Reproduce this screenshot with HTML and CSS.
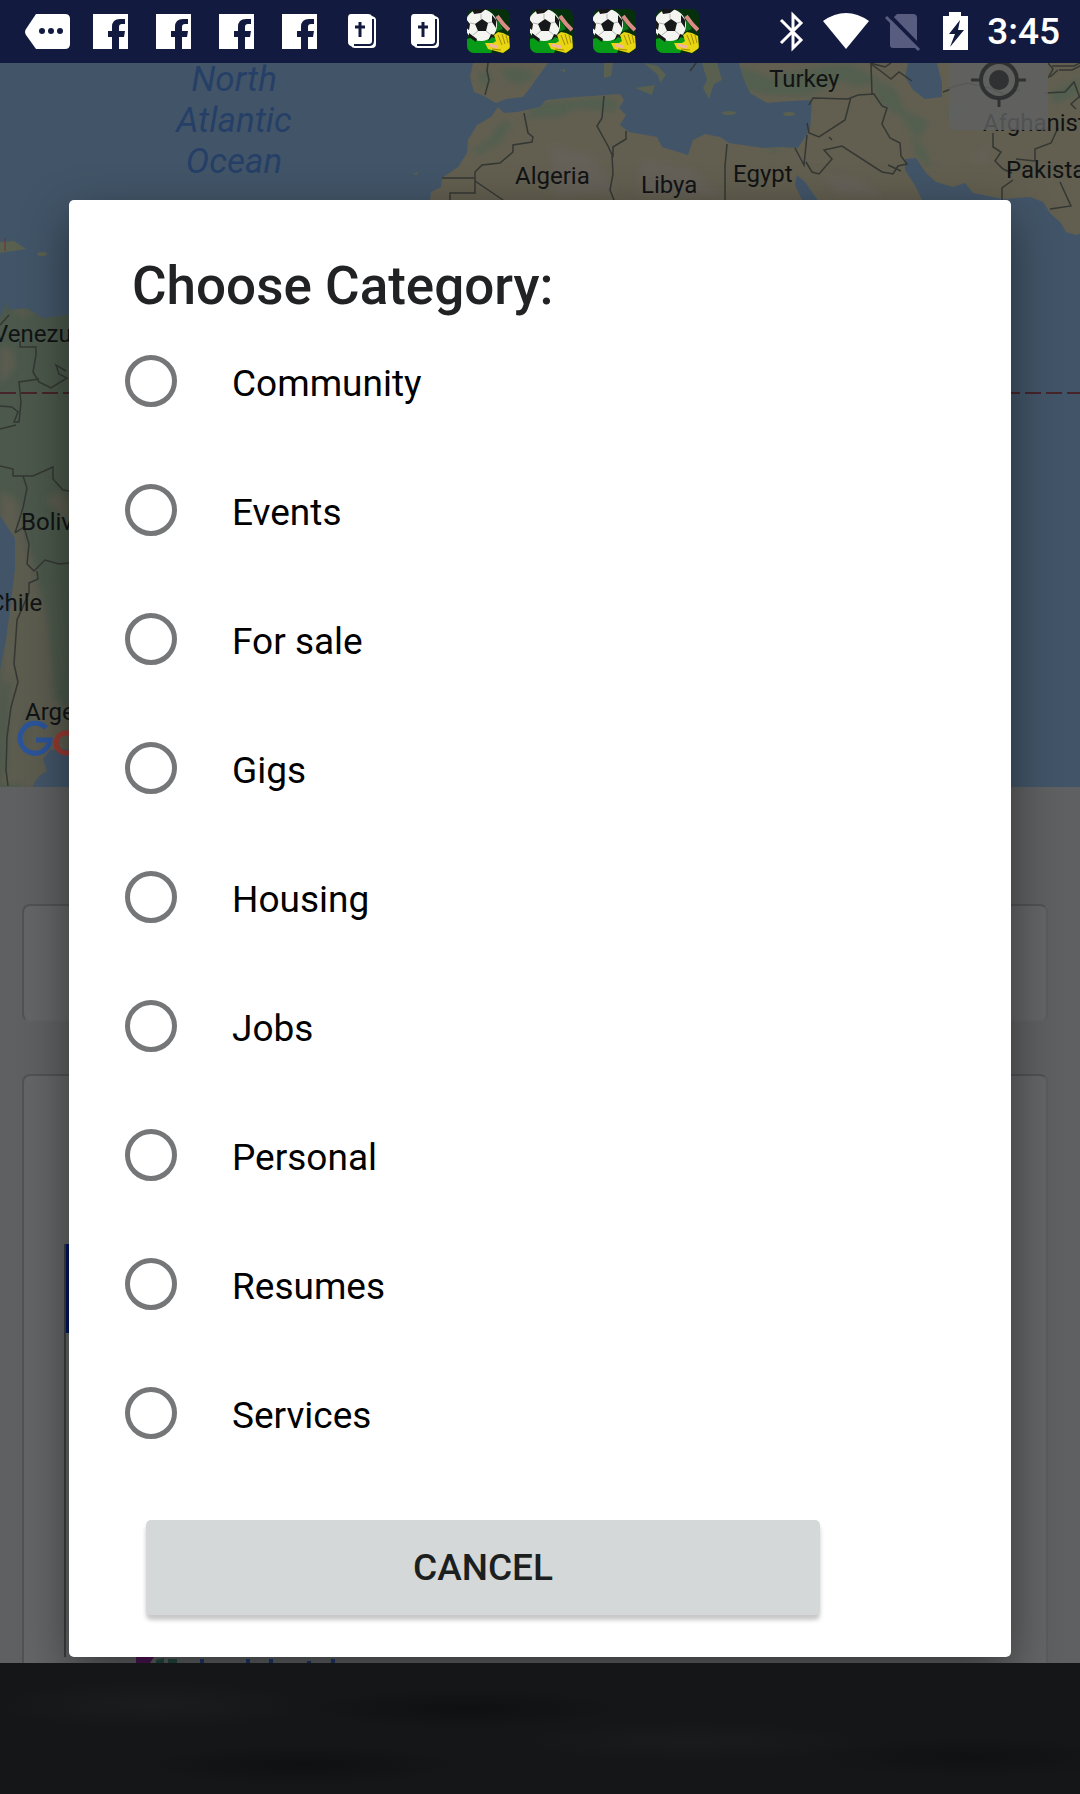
FILE: index.html
```html
<!DOCTYPE html>
<html lang="en">
<head>
<meta charset="utf-8">
<meta name="viewport" content="width=device-width, initial-scale=1">
<title>Choose Category</title>
<link rel="stylesheet" href="styles.css">
</head>
<body>
<svg class="defs" width="0" height="0" aria-hidden="true">
  <symbol id="fb" viewBox="0 0 63 63"><path fill="#fff" d="M14 14h35v35H40V37h5l1-6h-6v-4q0-3 3-3h3v-5h-5q-8 0-8 8v4h-4v6h4v12H14z"/></symbol>
  <symbol id="book" viewBox="0 0 63 63"><path fill="#fff" d="M20 14h17q3 0 4 2 4 1 4 4v24q0 4-4 4H24q-3 0-4-2-3-1-3-4V18q0-4 3-4z"/><path fill="none" stroke="#131a40" stroke-width="2" d="M42 19v22q0 4-4 4H23"/><path fill="none" stroke="#131a40" stroke-width="3" d="M29 22v15M24 27h10"/></symbol>
  <symbol id="ball" viewBox="0 0 63 63">
    <clipPath id="tile"><rect x="10" y="9" width="43" height="44" rx="7"/></clipPath>
    <g clip-path="url(#tile)">
      <path fill="#06300b" d="M10 9h43v44H10z"/><path fill="#089b18" d="M10 39q18-6 30 0l-6 14H10z"/>
      <path fill="#0b7617" d="M34 9l7 11-8 14 13-5z"/>
      <path stroke="#d98b86" stroke-width="4" fill="none" d="M40 16l6 8 6 6"/>
      <path fill="#e8d612" d="M37 35l4-3 5 1 6 3 1 12-7 5-15-4-3-6 8 0 3-2z"/>
      <path fill="none" stroke="#a48b09" d="M41 35l4 10M45 34l3 10M49 35l2 8M35 49l9 1"/>
      <path fill="none" stroke="#f1b4a0" stroke-width="3" d="M32 45l9 2"/>
      <circle cx="24" cy="25" r="16" fill="#f4f4f1"/>
      <path fill="#171819" d="M25 19l6 4-2 8h-8l-3-7zM15 9h14l-5 4-7 1zM35 15l4 5v8l-4-6zM9 19l4 5-1 6-4-3zM12 33l8 6-1 3-7-5zM34 34l3 1-6 6z"/>
      <path stroke="#b5b7b7" fill="none" d="M24 14v5M31 23l4-1M29 31l5 4M21 31l-5 4M18 24l-5-1"/>
    </g>
  </symbol>
</svg>

<header class="status">
  <div class="notices">
    <svg class="notice" viewBox="0 0 63 63"><path fill="#fff" d="M20 14h29q5 0 5 5v25q0 5-5 5H20L10 35q-2-3 0-6z"/><g fill="#131a40"><circle cx="26" cy="31" r="3"/><circle cx="35" cy="31" r="3"/><circle cx="44" cy="31" r="3"/></g></svg>
    <svg class="notice"><use href="#fb"/></svg>
    <svg class="notice"><use href="#fb"/></svg>
    <svg class="notice"><use href="#fb"/></svg>
    <svg class="notice"><use href="#fb"/></svg>
    <svg class="notice"><use href="#book"/></svg>
    <svg class="notice"><use href="#book"/></svg>
    <svg class="notice"><use href="#ball"/></svg>
    <svg class="notice"><use href="#ball"/></svg>
    <svg class="notice"><use href="#ball"/></svg>
    <svg class="notice"><use href="#ball"/></svg>
  </div>
  <div class="system">
    <svg class="signal" viewBox="0 0 55 63"><path fill="none" stroke="#fff" stroke-width="3" d="M17 20l20 20-8 8V15l8 8-20 20"/></svg>
    <svg class="signal" viewBox="0 0 55 63"><path fill="#fff" d="M4 21q23-16 46 0L27 49z"/></svg>
    <svg class="signal" viewBox="0 0 55 63"><path fill="#585d80" d="M23 14h16q4 0 4 4v30H19q-3 0-3-3V21z"/><path stroke="#131a40" stroke-width="4" d="M14 14l34 35"/><path stroke="#585d80" stroke-width="3" d="M12 17l33 33"/></svg>
    <svg class="signal" viewBox="0 0 55 63"><path fill="#fff" d="M14 16h6v-4h12v4h7v34H14z"/><path fill="#131a40" d="M31 20L20 34h6l-5 13 14-17h-6z"/></svg>
    <time class="clock">3:45</time>
  </div>
</header>

<main class="stage">
  <div class="page">
    <svg class="map" viewBox="0 63 1080 724" preserveAspectRatio="xMidYMin slice" role="img" aria-label="World map">
      <defs>
        <clipPath id="land"><path d="M430 202l1-10 10-5 1-9 16-11 9-14 1-13 9-15 14-8 7-10 6 6 13-1 23-5 6-7 31-3 30-2 13-1 4 6-5 8 7 7-6 10 9 7 28 5 5 10 26 8 5-15 12-6 15 3 9 6 34 5 18-1 17 1 3-5 9-13 2-30-21 1-24 2-17-10-7-16-4-14h344v170l-7 2-10-3-5-9-11-10-7-11-13-5-27 2-30-6-8-10-12 4-17-5-10-9-10-15-11 1v11l11 17 7 15zM473 63l-3 14 4 15 8 3 14 8 10-4 17-2 7-9 7-10 11-15z"/></clipPath>
        <clipPath id="west"><path d="M0 317l7-15 2 8 18-2 16 10 26-3v472H0V670l6-29 9-71v-32L0 516z"/></clipPath>
        <filter id="soft"><feGaussianBlur stdDeviation="3"/></filter>
      </defs>
      <path fill="#425568" d="M0 63h1080v724H0z"/>
      <g clip-path="url(#land)">
        <path fill="#625f50" d="M400 63h680v190H400z"/>
        <g fill="#535f50" filter="url(#soft)">
          <path d="M476 75l12-6 5 10-9 9zM500 67l26 2 12 8-20 8-12-5zM470 151l18-11 14-20 10 2-12 21-22 12zM536 103l70-7 14 7-5 9-38-3-20 8-33 2zM738 65l30 12 50-10 30-4 32 16-20 8-20-6-30 14-40 0-30-5zM870 78l25 10 10 22 25 12-12 18-18-24-20-12zM910 135l15 13 8 20-16-10zM768 147h12l-6 8zM1050 92l30-15v15l-26 14zM945 113l15-10 10 2-15 12z"/>
        </g>
        <g fill="#656059" filter="url(#soft)"><path d="M550 145l40 10 25 35-60 5zM640 160l50 8 32 28-85-3zM820 175l40 5 20 16-40-2zM970 160l18-14-2 16z"/></g>
      </g>
      <path fill="#425568" d="M797 175l8 7 14 20h-16l-8-17zM908 63l-3 14 8 13 12 9 17-2v-14l-5-20z"/>
      <g fill="#5a604f"><path d="M702 63l5 17-4 8 6 11 5-15 8-4-5-17zM644 63l14 3 8 9-6 8-2-8zM635 88l20-3-3 10zM604 63h9l-2 13-7 2zM0 242l14-1 12 8-26 4z"/><ellipse cx="729" cy="113" rx="7" ry="2"/><ellipse cx="789" cy="114" rx="6" ry="2"/><ellipse cx="42" cy="254" rx="5" ry="2"/><path d="M413 174l5-2-1 3zM560 70l5-1v3z"/></g>
      <g clip-path="url(#west)">
        <path fill="#4b584b" d="M0 300h70v490H0z"/>
        <g fill="#5b5b50" filter="url(#soft)"><path d="M0 345l12 5 4 15-10 14-6 4zM0 490l18 10 8 40 10 30 3 40-8 90-8 30 5 55H0zM45 500l15-10 9 15v18zM35 575l18 50 2 70 14 20v75H20l8-70zM10 305l25 8-15 4z"/></g>
        <path fill="#4d594b" filter="url(#soft)" d="M45 588l15-6 9 80-12 35zM0 690l10-12-4 92-6 5z"/>
        <path fill="#425568" d="M33 787q2-10 14-16l-4-12 7-9 19-1v38z"/>
      </g>
      <g class="border">
        <path d="M488 63l-1 8 2 9-4 15M524 113l4 20 5 4-1 5-19 3v7l-13 11-18 2-7 7v21h-25v10M475 181l28 19M442 178h32M604 96l-2 22-5 8 11 20 5 11v-10l13-8v-8M612 156l1 18-3 16 4 10M727 144l-2 22v34"/>
        <path d="M696 63l-6 8M809 105l4-7 35 1 10-4 16-1 8 12 5 2-5 16 8 14 10 5 1 13 6 8-9 2-5 8-11-2-40-26-18 4 8 9-13 15-7-2-6-10M851 97l-6 23-26 17-10-4-2-10M872 94l-1-30 11 8 9 7 8-7 13 9M795 148l9 17 3-30M829 137l3 3M888 165l13 6M943 92l8-3M949 88l18-5 23 5 18 8 12-7"/>
        <path d="M993 133v14l8 5-6 9 8 8 9 4M1035 161v-12l16-6 7-15M1016 159l19 2M1002 200v-12l11-8M1060 182l11 24-21 3M1045 93l20-1 9-10 6 16M1080 96l-9 8 5 5M1048 63l5 6-5 9"/>
        <path d="M1052 66h22l6-3M1059 70h13l8-4M1050 77l8-7M870 63l15 4 6-4M0 325l9-10M20 341v6h16v8l-3 17 6 10 12 6 16-10-8-4-3-9 10 6M39 379l-20 3 2 20-2 20h-5l4-10-6-5-12-1M0 429l16-4M0 466l13 3v7h20l20-9v12l10 11 6 1M23 476l4 12-4 20-8 25M15 533l9-6 5 17-2 20 7 7 11-11 14 4 10-1M37 571l1 8-9 4v10l-12 27-1 15-2 29 4 18-7 25-4 30-1 33 2 16"/>
      </g>
      <path class="equator" d="M0 393h70M1011 308M1004 393h76"/>
      <path stroke="#6a3038" d="M5 238v13"/>
      <g class="place">
        <text x="515" y="184">Algeria</text><text x="641" y="193">Libya</text><text x="733" y="182">Egypt</text><text x="769" y="87">Turkey</text>
        <text x="1006" y="178">Pakistan</text><text x="983" y="131">Afghanistan</text>
        <text x="-7" y="342">Venezuela</text><text x="21" y="530">Bolivia</text><text x="-11" y="611">Chile</text><text x="25" y="720">Argentina</text>
      </g>
      <g class="sea"><text x="234" y="91">North</text><text x="234" y="132">Atlantic</text><text x="234" y="173">Ocean</text></g>
      <path fill="#606263" fill-opacity=".8" d="M949 63h99v62q0 5-5 5h-89q-5 0-5-5z"/>
      <g fill="none" stroke="#303132" stroke-width="4"><circle cx="999" cy="80" r="18"/><path stroke-width="3" d="M971 80h10M1017 80h9M999 98v9"/></g><circle cx="999" cy="80" r="10" fill="#303132"/>
      <g class="logo"><path stroke="#2b549b" d="M46 728a15 15 0 1 0 4 12H36"/><circle cx="66" cy="743" r="10" stroke="#963a32"/></g>
    </svg>
    <section class="field"></section>
    <section class="panel">
      <div class="frame"><div class="bar"></div></div>
      <svg class="banner" viewBox="0 0 330 6" preserveAspectRatio="xMinYMin"><path fill="#4f1556" d="M0 0h18l-4 6H0z"/><path fill="#274c43" d="M20 3l8-2v5h-8zM32 2h9v4h-9z"/><path fill="#203970" d="M64 2h4v4h-4zM110 2h4v4h-4zM133 2h4v4h-4zM171 4h4v2h-4zM195 2h4v4h-4z"/></svg>
    </section>
  </div>

  <div class="overlay">
    <form class="dialog" role="dialog" aria-labelledby="title">
      <h1 class="title" id="title">Choose Category:</h1>
      <div class="options">
        <label class="option"><input class="radio" type="radio" name="category"><span class="name">Community</span></label>
        <label class="option"><input class="radio" type="radio" name="category"><span class="name">Events</span></label>
        <label class="option"><input class="radio" type="radio" name="category"><span class="name">For sale</span></label>
        <label class="option"><input class="radio" type="radio" name="category"><span class="name">Gigs</span></label>
        <label class="option"><input class="radio" type="radio" name="category"><span class="name">Housing</span></label>
        <label class="option"><input class="radio" type="radio" name="category"><span class="name">Jobs</span></label>
        <label class="option"><input class="radio" type="radio" name="category"><span class="name">Personal</span></label>
        <label class="option"><input class="radio" type="radio" name="category"><span class="name">Resumes</span></label>
        <label class="option"><input class="radio" type="radio" name="category"><span class="name">Services</span></label>
      </div>
      <button class="cancel" type="button">CANCEL</button>
    </form>
  </div>
</main>
<footer class="navbar"></footer>
</body>
</html>
```
FILE: styles.css
```css
* { box-sizing: border-box; }
body {
  margin: 0;
  min-height: 100vh;
  display: flex;
  flex-direction: column;
  background: #141516;
  color: #000;
  font-family: Roboto, "Liberation Sans", sans-serif;
}
.defs { position: absolute; }

.status {
  display: flex;
  justify-content: space-between;
  height: 63px;
  padding: 0 20px 0 16px;
  background: #131a40;
}
.notices, .system { display: flex; align-items: center; }
.notice { width: 63px; height: 63px; }
.signal { width: 55px; height: 63px; }
.clock { margin-left: 3px; color: #fff; font-size: 37px; font-weight: 500; line-height: 64px; }

/* The page and the dialog share one grid cell */
.stage { display: grid; overflow: hidden; }
.page, .overlay { grid-area: 1 / 1; min-width: 0; }
.page { display: flex; flex-direction: column; background: #5e6061; }
.map { display: block; width: 100%; height: 724px; }
.border { fill: none; stroke: #343733; stroke-width: 1.5; }
.equator { fill: none; stroke: #46242a; stroke-width: 2; stroke-dasharray: 16 5; }
.place { font-size: 24px; fill: #111314; }
.sea { font-size: 35px; font-style: italic; fill: #263f66; text-anchor: middle; }
.logo { fill: none; stroke-width: 5; }

.field, .panel {
  margin: 0 32px 0 22px;
  border: 2px solid #505253;
  border-right-color: #5a5c5d;
  background: #636566;
}
.field { height: 118px; margin-top: 117px; border-radius: 8px; border-bottom-color: #606263; }
.panel {
  flex: 1;
  display: flex;
  flex-direction: column;
  margin-top: 52px;
  padding: 168px 38px 0 40px;
  border-bottom: 0;
  border-radius: 8px 8px 0 0;
}
.frame { flex: 1; border: solid #3c3d3e; border-width: 0 2px; }
.bar { height: 89px; background: #001561; }
.banner { width: 330px; height: 6px; margin-left: 72px; }

.overlay { padding: 137px 69px 6px; }
.dialog {
  padding: 56px 64px 42px 56px;
  border-radius: 5px;
  background: #fff;
  box-shadow: 0 16px 48px rgba(0, 0, 0, 0.45);
}
.title { margin: 0 0 0 7px; color: #202224; font-size: 53px; font-weight: 500; line-height: 60px; }
.options { display: flex; flex-direction: column; }
.option { display: flex; align-items: center; gap: 55px; height: 129px; font-size: 37px; line-height: 44px; }
.name { padding-top: 6px; }
.radio {
  appearance: none;
  width: 52px;
  height: 52px;
  margin: 0;
  border: 5px solid #757678;
  border-radius: 50%;
}
.radio:checked { background: radial-gradient(circle, #757678 45%, transparent 48%); }
.cancel {
  display: block;
  width: 82%;
  height: 95px;
  margin: 43px 0 0 21px;
  border: 0;
  border-radius: 5px;
  background: #d4d8d9;
  box-shadow: 0 5px 4px rgba(0, 0, 0, 0.22);
  color: #1c1f20;
  font: 500 37px/44px Roboto, "Liberation Sans", sans-serif;
}

.navbar {
  flex: 1;
  min-height: 131px;
  background:
    radial-gradient(160px 24px at 14% 32%, #1b1c1d, transparent),
    radial-gradient(160px 20px at 43% 35%, #0f1011, transparent),
    radial-gradient(180px 20px at 64% 60%, #1a1b1c, transparent),
    radial-gradient(160px 20px at 28% 78%, #0f1011, transparent),
    radial-gradient(160px 20px at 90% 72%, #101112, transparent),
    #151617;
}
```
